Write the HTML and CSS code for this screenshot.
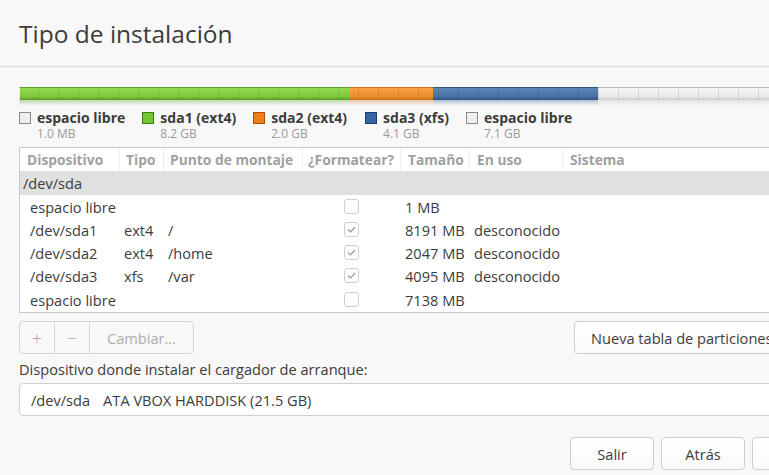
FILE: index.html
```html
<!DOCTYPE html>
<html lang="es">
<head>
<meta charset="utf-8">
<title>Tipo de instalación</title>
<link rel="stylesheet" href="styles.css">
</head>
<body>
<div class="window">
  <header class="title-bar">
    <h1 class="title">Tipo de instalación</h1>
  </header>
  <main class="content">
    <div class="disk-bar">
      <div class="seg seg-free" style="width:1px"><div class="seg-fill"></div><div class="seg-reflect"></div></div>
      <div class="seg seg-green" style="width:330px"><div class="seg-fill"></div><div class="seg-reflect"></div></div>
      <div class="seg seg-orange" style="width:83px"><div class="seg-fill"></div><div class="seg-reflect"></div></div>
      <div class="seg seg-blue" style="width:165px"><div class="seg-fill"></div><div class="seg-reflect"></div></div>
      <div class="seg seg-free seg-rest"><div class="seg-fill"></div><div class="seg-reflect"></div></div>
    </div>

    <div class="legend">
      <div class="legend-item">
        <span class="swatch swatch-free"></span>
        <div class="legend-text"><span class="legend-name">espacio libre</span><span class="legend-size">1.0 MB</span></div>
      </div>
      <div class="legend-item">
        <span class="swatch swatch-green"></span>
        <div class="legend-text"><span class="legend-name">sda1 (ext4)</span><span class="legend-size">8.2 GB</span></div>
      </div>
      <div class="legend-item">
        <span class="swatch swatch-orange"></span>
        <div class="legend-text"><span class="legend-name">sda2 (ext4)</span><span class="legend-size">2.0 GB</span></div>
      </div>
      <div class="legend-item">
        <span class="swatch swatch-blue"></span>
        <div class="legend-text"><span class="legend-name">sda3 (xfs)</span><span class="legend-size">4.1 GB</span></div>
      </div>
      <div class="legend-item">
        <span class="swatch swatch-free"></span>
        <div class="legend-text"><span class="legend-name">espacio libre</span><span class="legend-size">7.1 GB</span></div>
      </div>
    </div>

    <div class="table">
      <div class="row head">
        <div class="cell">Dispositivo</div>
        <div class="cell">Tipo</div>
        <div class="cell">Punto de montaje</div>
        <div class="cell">¿Formatear?</div>
        <div class="cell">Tamaño</div>
        <div class="cell">En uso</div>
        <div class="cell">Sistema</div>
      </div>
      <div class="row disk">
        <div class="cell">/dev/sda</div>
      </div>
      <div class="row part">
        <div class="cell dev">espacio libre</div>
        <div class="cell"></div>
        <div class="cell"></div>
        <div class="cell fmt"><span class="check"></span></div>
        <div class="cell">1 MB</div>
        <div class="cell"></div>
        <div class="cell"></div>
      </div>
      <div class="row part">
        <div class="cell dev">/dev/sda1</div>
        <div class="cell">ext4</div>
        <div class="cell">/</div>
        <div class="cell fmt"><span class="check checked"><svg viewBox="0 0 15 15" width="15" height="15"><path d="M4 7.5 L6.6 10 L11 5" fill="none" stroke="#9a9a9a" stroke-width="1.2"/></svg></span></div>
        <div class="cell">8191 MB</div>
        <div class="cell">desconocido</div>
        <div class="cell"></div>
      </div>
      <div class="row part">
        <div class="cell dev">/dev/sda2</div>
        <div class="cell">ext4</div>
        <div class="cell">/home</div>
        <div class="cell fmt"><span class="check checked"><svg viewBox="0 0 15 15" width="15" height="15"><path d="M4 7.5 L6.6 10 L11 5" fill="none" stroke="#9a9a9a" stroke-width="1.2"/></svg></span></div>
        <div class="cell">2047 MB</div>
        <div class="cell">desconocido</div>
        <div class="cell"></div>
      </div>
      <div class="row part">
        <div class="cell dev">/dev/sda3</div>
        <div class="cell">xfs</div>
        <div class="cell">/var</div>
        <div class="cell fmt"><span class="check checked"><svg viewBox="0 0 15 15" width="15" height="15"><path d="M4 7.5 L6.6 10 L11 5" fill="none" stroke="#9a9a9a" stroke-width="1.2"/></svg></span></div>
        <div class="cell">4095 MB</div>
        <div class="cell">desconocido</div>
        <div class="cell"></div>
      </div>
      <div class="row part">
        <div class="cell dev">espacio libre</div>
        <div class="cell"></div>
        <div class="cell"></div>
        <div class="cell fmt"><span class="check"></span></div>
        <div class="cell">7138 MB</div>
        <div class="cell"></div>
        <div class="cell"></div>
      </div>
    </div>

    <div class="toolbar">
      <div class="btn-group">
        <span class="gbtn icon">+</span>
        <span class="gbtn icon">−</span>
        <span class="gbtn text">Cambiar…</span>
      </div>
      <button class="btn new-table">Nueva tabla de particiones…</button>
    </div>

    <div class="boot-label">Dispositivo donde instalar el cargador de arranque:</div>
    <div class="combo"><span class="combo-dev">/dev/sda</span><span>ATA VBOX HARDDISK (21.5 GB)</span></div>

    <div class="actions">
      <button class="btn action">Salir</button>
      <button class="btn action">Atrás</button>
      <button class="btn action last" aria-label="Instalar ahora"></button>
    </div>
  </main>
</div>
</body>
</html>
```

FILE: styles.css
```css
html, body {
  margin: 0;
  padding: 0;
}
body {
  background: #f8f8f8;
  font-family: "Open Sans", "Noto Sans", sans-serif;
  color: #3c3c3c;
  font-size: 14.6px;
  overflow: hidden;
  width: 769px;
  height: 475px;
}
.window {
  width: 920px;
}
.title-bar {
  height: 67px;
  border-bottom: 1px solid #dcdcdc;
  box-sizing: border-box;
  display: flex;
  align-items: center;
  padding-left: 19px;
}
.title {
  margin: 0;
  font-weight: 400;
  font-size: 24.5px;
  line-height: 30px;
  color: #3c3c3c;
  padding-top: 1px;
}
.content {
  padding: 20px 35px 0 19px;
}

/* partition bar */
.disk-bar {
  display: flex;
  width: 866px;
  height: 19px;
  position: relative;
}
.disk-bar::after {
  content: "";
  position: absolute;
  left: 0; top: 1px;
  width: 100%;
  height: 12px;
  background: repeating-linear-gradient(90deg, transparent 0 19px, rgba(0,0,0,0.10) 19px 20px);
  pointer-events: none;
}
.seg {
  display: flex;
  flex-direction: column;
}
.seg-rest { flex: 1; }
.seg-fill {
  height: 13px;
  box-sizing: border-box;
  border-top: 1px solid;
}
.seg-reflect {
  height: 6px;
  opacity: 0.35;
}
.seg-green .seg-fill { background: linear-gradient(#92da52, #7fc93c 70%, #5b9b27); border-color: #5b9f2c; }
.seg-green .seg-reflect { background: linear-gradient(#5b9b27, rgba(255,255,255,0)); }
.seg-orange .seg-fill { background: linear-gradient(#f7a247, #ee8f2d 70%, #c46f1c); border-color: #cc7422; }
.seg-orange .seg-reflect { background: linear-gradient(#c46f1c, rgba(255,255,255,0)); }
.seg-blue .seg-fill { background: linear-gradient(#5d85b6, #4a72a4 70%, #2f5483); border-color: #325683; }
.seg-blue .seg-reflect { background: linear-gradient(#2f5483, rgba(255,255,255,0)); }
.seg-free .seg-fill { background: linear-gradient(#f4f4f4, #e9e9e9 70%, #cfcfcf); border-color: #b9b9b9; }
.seg-free .seg-reflect { background: linear-gradient(#bdbdbd, rgba(255,255,255,0)); }

/* legend */
.legend {
  display: flex;
  margin-top: 3px;
  height: 38px;
}
.legend-item {
  display: flex;
  align-items: flex-start;
  margin-right: 17px;
}
.legend-item:nth-child(3) { margin-right: 18px; }
.swatch {
  width: 12px;
  height: 12px;
  box-sizing: border-box;
  border: 1px solid;
  margin-top: 3px;
  margin-right: 6px;
  flex-shrink: 0;
}
.swatch-free { background: #eeeeee; border-color: #8a8a8a; }
.swatch-green { background: #73c72f; border-color: #3f7a16; }
.swatch-orange { background: #f07d1a; border-color: #a84f0a; }
.swatch-blue { background: #3465a4; border-color: #1d3e6b; }
.legend-text {
  display: flex;
  flex-direction: column;
}
.legend-name {
  font-weight: 700;
  font-size: 14px;
  line-height: 17px;
}
.legend-size {
  font-size: 12px;
  line-height: 15px;
  color: #9a9a9a;
}

/* table */
.table {
  background: #fff;
  border: 1px solid #c9c9c9;
  width: 900px;
}
.row {
  display: grid;
  grid-template-columns: 100px 44px 139px 98px 69px 93px 1fr;
  align-items: center;
}
.row.head {
  height: 23px;
  font-weight: 700;
  font-size: 13.8px;
  color: #a0a0a0;
}
.row.head .cell {
  padding-left: 7px;
  border-right: 1px solid #efefef;
  height: 23px;
  line-height: 23px;
  white-space: nowrap;
  overflow: hidden;
}
.row.head .cell:nth-child(2) { padding-left: 6px; }
.row.head .cell:nth-child(3) { padding-left: 6px; }
.row.head .cell:nth-child(4) { padding-left: 5px; }
.row.disk {
  height: 24px;
  background: #e0e0e0;
  grid-template-columns: 1fr;
}
.row.disk .cell { padding-left: 3px; }
.row.part {
  height: 23px;
}
.row.part .cell {
  padding-left: 4px;
  white-space: nowrap;
}
.row.part .cell.dev { padding-left: 10px; }
.row.part .cell.fmt {
  padding-left: 0;
  display: flex;
  justify-content: center;
  padding-right: 1px;
}
.row.part:last-child { height: 25px; }
.check {
  width: 15px;
  height: 15px;
  box-sizing: border-box;
  border: 1px solid #cfcfcf;
  border-radius: 3px;
  background: #fdfdfd;
  display: flex;
  align-items: center;
  justify-content: center;
}
.check svg { display: block; margin: -1px; }

/* toolbar */
.toolbar {
  display: flex;
  justify-content: space-between;
  align-items: center;
  margin-top: 8px;
  width: 866px;
}
.btn-group {
  display: flex;
  height: 33px;
  border: 1px solid #d6d6d6;
  border-radius: 4px;
  box-sizing: border-box;
  color: #adadad;
}
.gbtn {
  display: flex;
  align-items: center;
  justify-content: center;
  border-right: 1px solid #d6d6d6;
}
.gbtn:last-child { border-right: none; }
.gbtn.icon { width: 34px; font-size: 18px; font-weight: 300; }
.gbtn.text { width: 103px; }
.btn {
  font-family: inherit;
  font-size: 14.6px;
  color: #3c3c3c;
  background: linear-gradient(#ffffff, #fafafa);
  border: 1px solid #cfcfcf;
  border-radius: 4px;
  height: 33px;
  padding: 0;
  box-sizing: border-box;
  flex-shrink: 0;
  white-space: nowrap;
}
.new-table {
  width: 311px;
  text-align: left;
  padding-left: 16px;
}

.boot-label {
  margin-top: 6px;
  line-height: 18px;
}
.combo {
  margin-top: 5px;
  height: 33px;
  box-sizing: border-box;
  width: 866px;
  background: #fff;
  border: 1px solid #cfcfcf;
  border-radius: 4px;
  display: flex;
  align-items: center;
  padding-left: 11px;
}
.combo-dev { margin-right: 13px; }

.actions {
  display: flex;
  gap: 7px;
  margin-top: 21px;
  padding-left: 551px;
}
.action { width: 84px; }
.action.last { width: 150px; }
```
